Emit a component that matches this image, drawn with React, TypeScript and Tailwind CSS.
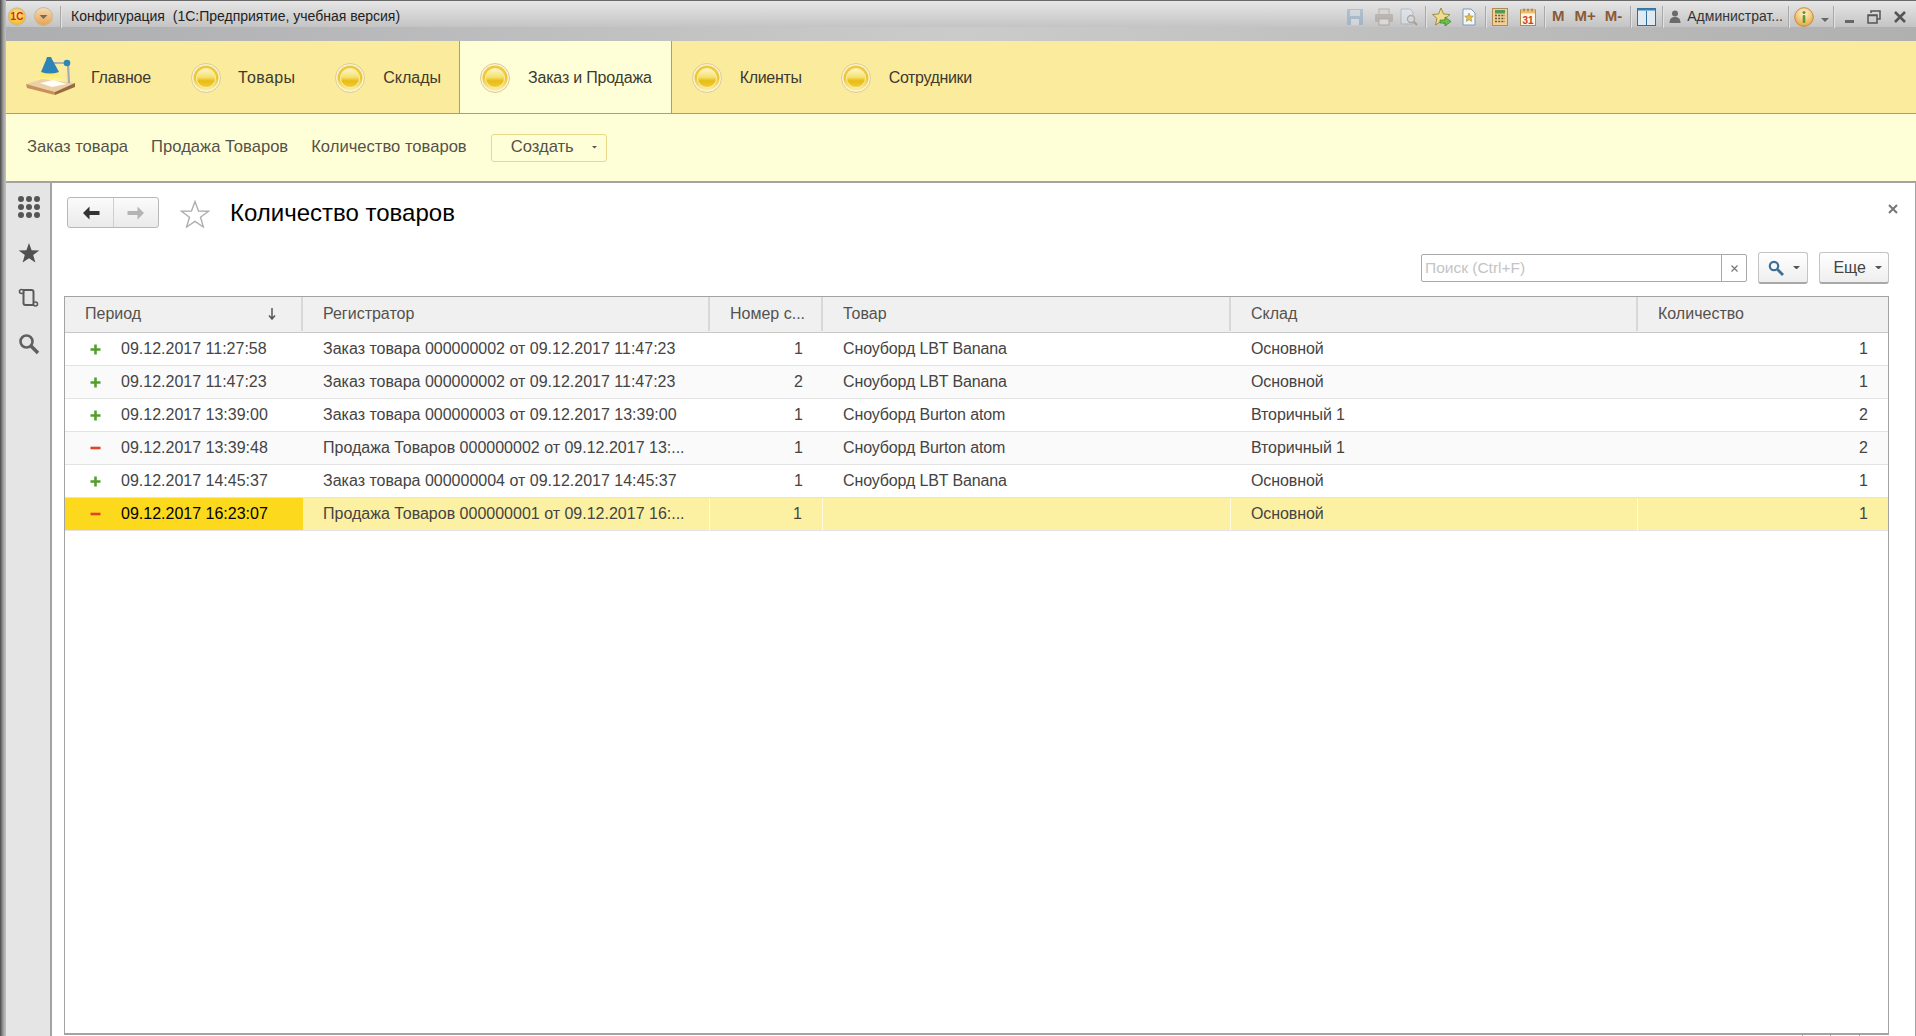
import React from "react";

const rows = [
  { s: "+", d: "09.12.2017 11:27:58", r: "Заказ товара 000000002 от 09.12.2017 11:47:23", n: "1", t: "Сноуборд LBT Banana", w: "Основной", q: "1" },
  { s: "+", d: "09.12.2017 11:47:23", r: "Заказ товара 000000002 от 09.12.2017 11:47:23", n: "2", t: "Сноуборд LBT Banana", w: "Основной", q: "1" },
  { s: "+", d: "09.12.2017 13:39:00", r: "Заказ товара 000000003 от 09.12.2017 13:39:00", n: "1", t: "Сноуборд Burton atom", w: "Вторичный 1", q: "2" },
  { s: "-", d: "09.12.2017 13:39:48", r: "Продажа Товаров 000000002 от 09.12.2017 13:...", n: "1", t: "Сноуборд Burton atom", w: "Вторичный 1", q: "2" },
  { s: "+", d: "09.12.2017 14:45:37", r: "Заказ товара 000000004 от 09.12.2017 14:45:37", n: "1", t: "Сноуборд LBT Banana", w: "Основной", q: "1" },
  { s: "-", d: "09.12.2017 16:23:07", r: "Продажа Товаров 000000001 от 09.12.2017 16:...", n: "1", t: "", w: "Основной", q: "1" },
];

const gridCols = "grid grid-cols-[238px_407px_113px_408px_407px_1fr]";

function Ball({ id }: { id: string }) {
  return (
    <svg width="30" height="30" viewBox="0 0 30 30" className="shrink-0">
      <defs>
        <linearGradient id={id + "a"} x1="0" y1="0" x2="0" y2="1">
          <stop offset="0" stopColor="#eecb48" />
          <stop offset="0.5" stopColor="#ecc630" />
          <stop offset="1" stopColor="#fbeea8" />
        </linearGradient>
        <linearGradient id={id + "b"} x1="0" y1="0" x2="0" y2="1">
          <stop offset="0" stopColor="#fff8c8" />
          <stop offset="0.45" stopColor="#f6e070" />
          <stop offset="0.65" stopColor="#e8bc14" />
          <stop offset="1" stopColor="#f0cc3c" />
        </linearGradient>
      </defs>
      <circle cx="15" cy="15" r="14.5" fill="#fdf5cc" stroke="#dbc99e" strokeWidth="1" />
      <circle cx="15" cy="15" r="12.5" fill={`url(#${id}a)`} />
      <circle cx="15" cy="15" r="9.5" fill={`url(#${id}b)`} stroke="#fbeeb0" strokeWidth="1" />
    </svg>
  );
}

function Lamp() {
  return (
    <svg width="50" height="40" viewBox="0 0 50 40" className="shrink-0">
      <defs>
        <linearGradient id="lampLight" x1="0" y1="0" x2="0" y2="1">
          <stop offset="0" stopColor="#ffe94a" />
          <stop offset="1" stopColor="#fff6b8" />
        </linearGradient>
      </defs>
      <path d="M17 15 L30 15 L40 27 L8 27 Z" fill="url(#lampLight)" />
      <path d="M0 28 L16 23 L49 27 L29 36 Z" fill="#ebcfa6" />
      <path d="M14 27 L27 24 L41 28 L26 31 Z" fill="#fffdf6" />
      <path d="M0 28 L29 36 L29 39 L1 32 Z" fill="#c98f5a" />
      <path d="M29 36 L49 27 L49 31 L29 39 Z" fill="#9a6a3f" />
      <path d="M27 7 H41" stroke="#a8b0b8" strokeWidth="2" />
      <path d="M42 8 L43 27" stroke="#a7abb0" strokeWidth="2.2" />
      <circle cx="41" cy="7" r="3.3" fill="#2d86b8" />
      <path d="M21 1 H25 L26.5 4 L33 16 Q24 19 15 16 L20 4 Z" fill="#2f84b7" />
    </svg>
  );
}

function NavItem({ label, id, active, extra, pr }: { label: string; id: string; active?: boolean; extra?: string; pr?: string }) {
  return (
    <div className={`flex items-center h-full pl-5 ${pr ?? "pr-5"} gap-[18px] pt-px ${active ? "bg-[#ffffd7] border-x border-[#c0a32a] h-[73px] relative z-10" : ""}`}>
      <Ball id={id} />
      <span className={`text-[16px] text-[#3d3a30] whitespace-nowrap ${extra ?? ""}`}>{label}</span>
    </div>
  );
}

const Sep = () => <div className="w-px h-[22px] bg-[#a8a8a8] border-r border-[#e2e2e2] box-content" />;

function Floppy() {
  return (
    <svg width="18" height="18" viewBox="0 0 18 18" className="opacity-40">
      <rect x="1" y="1" width="16" height="16" rx="1" fill="#6f9bc0" />
      <rect x="4" y="2" width="10" height="6" fill="#c9d9e6" />
      <rect x="5" y="11" width="8" height="6" fill="#dfe8ef" />
    </svg>
  );
}
function Printer() {
  return (
    <svg width="20" height="18" viewBox="0 0 20 18" className="opacity-45">
      <rect x="5" y="1" width="10" height="6" fill="#d8d2cc" stroke="#8b8078" />
      <rect x="1" y="6" width="18" height="8" rx="1" fill="#9e9287" />
      <rect x="5" y="11" width="10" height="6" fill="#eee" stroke="#8b8078" />
    </svg>
  );
}
function Preview() {
  return (
    <svg width="20" height="18" viewBox="0 0 20 18" className="opacity-45">
      <path d="M2 1 H11 L14 4 V16 H2 Z" fill="#e8eef4" stroke="#7e9db8" />
      <circle cx="12" cy="11" r="3.5" fill="#d7e5f0" stroke="#8a7a68" strokeWidth="1.3" />
      <path d="M14.5 13.5 L18 17" stroke="#8a6a48" strokeWidth="2" />
    </svg>
  );
}
function StarArrow() {
  return (
    <svg width="20" height="20" viewBox="0 0 20 20">
      <path d="M9 1 L11.5 7 L18 7.5 L13 11.5 L14.5 18 L9 14.5 L3.5 18 L5 11.5 L0.5 7.5 L6.5 7 Z" fill="#f0dc8a" stroke="#8a7a30" strokeWidth="0.8" />
      <path d="M8 13 H13 V10 L19 14.5 L13 19 V16 H8 Z" fill="#6cc04a" stroke="#3f7e2a" strokeWidth="0.7" />
    </svg>
  );
}
function Bookmark() {
  return (
    <svg width="14" height="18" viewBox="0 0 14 18">
      <path d="M1 1 H9 L13 5 V17 H1 Z" fill="#f5f8fb" stroke="#7f9ab2" />
      <path d="M7 5 L8.3 8 L11.3 8.2 L9 10.3 L9.8 13.4 L7 11.7 L4.2 13.4 L5 10.3 L2.7 8.2 L5.7 8 Z" fill="#e8c040" stroke="#8f7a35" strokeWidth="0.5" />
    </svg>
  );
}
function Calc() {
  return (
    <svg width="16" height="18" viewBox="0 0 16 18">
      <rect x="0.5" y="0.5" width="15" height="17" fill="#f2cf96" stroke="#b08a50" />
      <rect x="3" y="2" width="10" height="3.5" fill="#4f9a54" />
      <path d="M3 7.5 H13 M3 10.5 H13 M3 13.5 H13" stroke="#6d5a3a" strokeWidth="1.6" strokeDasharray="2 1.2" />
    </svg>
  );
}
function Calendar() {
  return (
    <svg width="16" height="18" viewBox="0 0 16 18">
      <rect x="0.5" y="2" width="15" height="15.5" fill="#fbf5e6" stroke="#b08a50" />
      <rect x="1" y="2" width="14" height="3.5" fill="#f0bf70" />
      <path d="M4 0.5 V3.5 M8 0.5 V3.5 M12 0.5 V3.5" stroke="#8a6a40" />
      <text x="8" y="15.5" textAnchor="middle" fontSize="10" fontWeight="700" fill="#c9421f" fontFamily="Liberation Sans, sans-serif">31</text>
    </svg>
  );
}
function Panels() {
  return (
    <svg width="19" height="18" viewBox="0 0 19 18">
      <rect x="0.5" y="0.5" width="18" height="17" fill="#dfeaf3" stroke="#2f6d9c" />
      <rect x="0.5" y="0.5" width="18" height="2" fill="#3a7fb0" />
      <path d="M9.5 3 V17" stroke="#2f6d9c" />
    </svg>
  );
}
function User() {
  return (
    <svg width="12" height="14" viewBox="0 0 12 14">
      <circle cx="6" cy="3.5" r="3" fill="#6b6b6b" />
      <path d="M0.5 13 C0.5 8.5 3 7 6 7 C9 7 11.5 8.5 11.5 13 Z" fill="#6b6b6b" />
    </svg>
  );
}
function Info() {
  return (
    <svg width="20" height="20" viewBox="0 0 20 20">
      <defs>
        <radialGradient id="inf" cx="0.5" cy="0.3" r="0.8">
          <stop offset="0" stopColor="#fff6d0" />
          <stop offset="1" stopColor="#e49a32" />
        </radialGradient>
      </defs>
      <circle cx="10" cy="10" r="9.3" fill="url(#inf)" stroke="#c98a35" />
      <circle cx="10" cy="5.5" r="1.6" fill="#5f9a2a" />
      <rect x="8.7" y="8" width="2.6" height="8" rx="1" fill="#5f9a2a" />
    </svg>
  );
}
const Caret = ({ c = "#555", w = 8 }: { c?: string; w?: number }) => (
  <svg width={w} height={w / 2} viewBox="0 0 8 4" className="shrink-0"><path d="M0 0 H8 L4 4 Z" fill={c} /></svg>
);

function Logo1C() {
  return (
    <svg width="18" height="19" viewBox="0 0 18 19">
      <defs>
        <radialGradient id="lg" cx="0.5" cy="0.4" r="0.6">
          <stop offset="0" stopColor="#ffe88a" />
          <stop offset="1" stopColor="#f3b722" />
        </radialGradient>
      </defs>
      <circle cx="9" cy="9.5" r="8.6" fill="url(#lg)" stroke="#c9b89a" />
      <text x="9" y="13" textAnchor="middle" fontSize="10" fontWeight="700" fill="#d5281a" fontFamily="Liberation Sans, sans-serif">1С</text>
    </svg>
  );
}
function MenuBtn() {
  return (
    <svg width="19" height="19" viewBox="0 0 19 19">
      <defs>
        <linearGradient id="mb" x1="0" y1="0" x2="0" y2="1">
          <stop offset="0" stopColor="#f3dcb8" />
          <stop offset="1" stopColor="#e7a24e" />
        </linearGradient>
      </defs>
      <circle cx="9.5" cy="9.5" r="9" fill="url(#mb)" stroke="#c9b89a" />
      <path d="M5.5 8 H13.5 L9.5 12 Z" fill="#7a6a58" />
    </svg>
  );
}

function TitleBar() {
  return (
    <div className="h-[41px] shrink-0 relative bg-gradient-to-r from-[#adaeb0] via-[#cbcbcb] to-[#b0b0b0]">
      <div className="h-[27px] flex items-center bg-gradient-to-b from-[#e6e6e6] to-[#c4c4c4] border-t border-[#6a6a6a] pl-[2px] pr-[10px] pt-[5px]">
        <Logo1C />
        <div className="ml-[8px]"><MenuBtn /></div>
        <div className="ml-[7px]"><Sep /></div>
        <span className="ml-[9px] text-[14px] text-[#222] whitespace-nowrap">Конфигурация&nbsp; (1С:Предприятие, учебная версия)</span>
        <div className="flex-1" />
        <Floppy />
        <div className="ml-[10px]"><Printer /></div>
        <div className="ml-[5px]"><Preview /></div>
        <div className="ml-[6px]"><Sep /></div>
        <div className="ml-[5px]"><StarArrow /></div>
        <div className="ml-[10px]"><Bookmark /></div>
        <div className="ml-[9px]"><Sep /></div>
        <div className="ml-[5px]"><Calc /></div>
        <div className="ml-[12px]"><Calendar /></div>
        <div className="ml-[8px]"><Sep /></div>
        <span className="ml-[6px] text-[15px] font-bold text-[#8a5a35]">M</span>
        <span className="ml-[10px] text-[15px] font-bold text-[#8a5a35]">M+</span>
        <span className="ml-[9px] text-[15px] font-bold text-[#8a5a35]">M-</span>
        <div className="ml-[8px]"><Sep /></div>
        <div className="ml-[5px]"><Panels /></div>
        <div className="ml-[6px]"><Sep /></div>
        <div className="ml-[5px]"><User /></div>
        <span className="ml-[6px] text-[14px] text-[#333] whitespace-nowrap">Администрат...</span>
        <div className="ml-[5px]"><Sep /></div>
        <div className="ml-[4px]"><Info /></div>
        <div className="ml-[7px] mt-[6px]"><Caret c="#666" /></div>
        <div className="ml-[4px]"><Sep /></div>
        <div className="ml-[10px] w-[9px] h-[3px] bg-[#666] mt-[9px]" />
        <svg className="ml-[13px]" width="14" height="14" viewBox="0 0 14 14"><path d="M4 3 V1 H13 V9 H10 M1 5 H10 V13 H1 Z M1 5.5 H10" fill="none" stroke="#555" strokeWidth="1.5" /></svg>
        <svg className="ml-[13px]" width="12" height="12" viewBox="0 0 12 12"><path d="M1 1 L11 11 M11 1 L1 11" stroke="#555" strokeWidth="2.6" /></svg>
      </div>
    </div>
  );
}

function TopNav() {
  return (
    <div className="h-[73px] shrink-0 flex bg-[#fbeb9d] border-b border-[#c0a32a]">
      <div className="flex items-center h-full pl-[20px] pr-[20px] gap-[15px]">
        <div className="-mt-[2px]"><Lamp /></div>
        <span className="text-[16px] text-[#3d3a30] pt-px tracking-[-0.15px]">Главное</span>
      </div>
      <NavItem label="Товары" id="b1" extra="tracking-[0.35px] -ml-[1px]" />
      <NavItem label="Склады" id="b2" pr="pr-[18px]" />
      <NavItem label="Заказ и Продажа" id="b3" active pr="pr-[19px]" extra="tracking-[-0.2px]" />
      <NavItem label="Клиенты" id="b4" pr="pr-[19px]" extra="tracking-[-0.3px]" />
      <NavItem label="Сотрудники" id="b5" extra="tracking-[-0.36px]" />
    </div>
  );
}

function SubNav() {
  return (
    <div className="h-[69px] shrink-0 flex items-center bg-[#ffffd7] border-b-2 border-[#a3a3a3] pl-[21px] text-[16.6px] text-[#55524a] gap-[23px]">
      <span>Заказ товара</span>
      <span>Продажа Товаров</span>
      <span>Количество товаров</span>
      <div className="ml-[1px] w-[116px] h-[28px] flex items-center border border-[#e8d88a] rounded-[3px] pl-[19px] pr-[9px] justify-between">
        <span>Создать</span>
        <Caret c="#555" w={5} />
      </div>
    </div>
  );
}

function Sidebar() {
  return (
    <div className="w-[46px] shrink-0 bg-[#e5e5e5] border-r-2 border-[#a3a3a3] flex flex-col items-center pt-[13px] pl-[1px] gap-[14px]">
      <svg width="22" height="22" viewBox="0 0 22 22" fill="#555">
        {[3, 11, 19].flatMap((y) => [3, 11, 19].map((x) => <circle key={`${x}-${y}`} cx={x} cy={y} r="3" />))}
      </svg>
      <svg width="22" height="22" viewBox="0 0 22 22" fill="#505050" className="mt-[10px]">
        <path d="M11 1 L13.6 8.2 L21.3 8.4 L15.2 13.1 L17.4 20.6 L11 16.2 L4.6 20.6 L6.8 13.1 L0.7 8.4 L8.4 8.2 Z" />
      </svg>
      <svg width="21" height="22" viewBox="0 0 21 22" fill="none" stroke="#5a5a5a" strokeWidth="2" className="mt-[9px]">
        <path d="M3 3 H13.5 Q15.5 3 15.5 5 V18" />
        <path d="M5.5 4 V16 Q5.5 18 7.5 18 H18" />
        <circle cx="3.5" cy="4.5" r="2" fill="#e5e5e5" strokeWidth="1.6" />
        <circle cx="17.5" cy="17" r="2" fill="#e5e5e5" strokeWidth="1.6" />
      </svg>
      <svg width="22" height="22" viewBox="0 0 22 22" fill="none" stroke="#606060" className="mt-[10px]">
        <circle cx="8.5" cy="8.5" r="6" strokeWidth="2.6" />
        <path d="M13 13 L20 20" strokeWidth="3.6" />
      </svg>
    </div>
  );
}

function ContentHeader() {
  return (
    <div className="h-[69px] shrink-0 flex items-start pl-[15px] pt-[14px] relative">
      <div className="flex w-[92px] h-[31px] border border-[#b8b8b8] rounded-[3px] bg-gradient-to-b from-[#fbfbfb] to-[#eaeaea]">
        <div className="w-[46px] flex items-center justify-center border-r border-[#cfcfcf]">
          <svg width="18" height="14" viewBox="0 0 18 14"><path d="M7.5 0.5 L1 7 L7.5 13.5 V9 H17.5 V5 H7.5 Z" fill="#333" /></svg>
        </div>
        <div className="flex-1 flex items-center justify-center">
          <svg width="18" height="14" viewBox="0 0 18 14"><path d="M10.5 0.5 L17 7 L10.5 13.5 V9 H0.5 V5 H10.5 Z" fill="#b4b4b4" /></svg>
        </div>
      </div>
      <svg className="ml-[21px] mt-[3px]" width="30" height="28" viewBox="0 0 30 28">
        <path d="M15 1.5 L18.5 11 L28.5 11.2 L20.5 17.3 L23.4 27 L15 21.3 L6.6 27 L9.5 17.3 L1.5 11.2 L11.5 11 Z" fill="#fff" stroke="#aeaeae" strokeWidth="1.4" />
      </svg>
      <h1 className="ml-[20px] text-[24px] leading-[30px] text-black font-normal mt-px">Количество товаров</h1>
      <svg className="absolute right-[17px] top-[21px]" width="10" height="10" viewBox="0 0 10 10"><path d="M1 1 L9 9 M9 1 L1 9" stroke="#777" strokeWidth="2" /></svg>
    </div>
  );
}

function SearchBar() {
  return (
    <div className="h-[44px] shrink-0 flex items-start justify-end pr-[26px]">
      <div className="mt-[2px] w-[326px] h-[28px] flex border border-[#a8a8a8] rounded-[2px] bg-white">
        <span className="flex-1 pl-[3px] text-[15.5px] leading-[26px] text-[#c4c4c4]">Поиск (Ctrl+F)</span>
        <div className="w-[25px] flex items-center justify-center border-l border-[#a8a8a8]">
          <svg width="7" height="7" viewBox="0 0 7 7"><path d="M0.5 0.5 L6.5 6.5 M6.5 0.5 L0.5 6.5" stroke="#777" strokeWidth="1.2" /></svg>
        </div>
      </div>
      <div className="ml-[11px] w-[50px] h-[32px] flex items-center justify-center gap-[9px] pl-[2px] border border-[#c4c4c4] border-b-2 border-b-[#a8a8a8] rounded-[3px] bg-gradient-to-b from-white to-[#eeeeee]">
        <svg width="16" height="16" viewBox="0 0 16 16" fill="none" stroke="#3d7097"><circle cx="6" cy="6" r="4.2" strokeWidth="2.2" /><path d="M9.5 9.5 L15 15" strokeWidth="2.8" /></svg>
        <Caret c="#555" w={7} />
      </div>
      <div className="ml-[11px] w-[70px] h-[32px] flex items-center justify-end pr-[6px] gap-[9px] border border-[#c4c4c4] border-b-2 border-b-[#a8a8a8] rounded-[3px] bg-gradient-to-b from-white to-[#eeeeee] text-[16px] text-[#444]">
        <span>Еще</span>
        <Caret c="#555" w={7} />
      </div>
    </div>
  );
}

function HeaderCell({ children, last }: { children: React.ReactNode; last?: boolean }) {
  return <div className={`h-[34px] pl-[20px] flex items-center text-[16px] text-[#55524e] ${last ? "" : "border-r-2 border-[#d8d8d8]"}`}>{children}</div>;
}

function Table() {
  return (
    <div className="flex-1 mr-[26px] ml-[12px] mb-px border border-[#a3a3a3] border-b-2 bg-white relative text-[16px] text-[#444]">
      <div className={`${gridCols} bg-[#f0f0f0] border-b border-[#c8c8c8] pb-px`}>
        <HeaderCell>
          <span className="flex-1">Период</span>
          <svg className="mr-[25px]" width="8" height="12" viewBox="0 0 8 12"><path d="M4 0 V10 M1 7.5 L4 11 L7 7.5" fill="none" stroke="#555" strokeWidth="1.5" /></svg>
        </HeaderCell>
        <HeaderCell>Регистратор</HeaderCell>
        <HeaderCell>Номер с...</HeaderCell>
        <HeaderCell>Товар</HeaderCell>
        <HeaderCell>Склад</HeaderCell>
        <HeaderCell last>Количество</HeaderCell>
      </div>
      {rows.map((row, i) => {
        const sel = i === 5;
        const base = "h-[33px] flex items-center border-b border-[#e3e3e3] whitespace-nowrap";
        const divider = sel ? "border-r border-r-[#fffbe0]" : "";
        return (
          <div key={i} className={`${gridCols} ${sel ? "bg-[#fcf0a2]" : i % 2 ? "bg-[#fafafa]" : "bg-white"}`}>
            <div className={`${base} pl-[25px] ${sel ? "bg-[#fdd91e] text-black" : ""}`}>
              <span className="w-[11px] flex justify-center">
                {row.s === "+" ? (
                  <svg width="11" height="11" viewBox="0 0 11 11"><path d="M5.5 0.5 V10.5 M0.5 5.5 H10.5" stroke="#52a02c" strokeWidth="2.6" /></svg>
                ) : (
                  <svg width="11" height="4" viewBox="0 0 11 4"><path d="M0.5 2 H10.5" stroke="#e0432a" strokeWidth="2.6" /></svg>
                )}
              </span>
              <span className="ml-[20px]">{row.d}</span>
            </div>
            <div className={`${base} ${divider} pl-[20px]`}>{row.r}</div>
            <div className={`${base} ${divider} justify-end pr-[20px]`}>{row.n}</div>
            <div className={`${base} ${divider} pl-[20px] tracking-[-0.13px]`}>{row.t}</div>
            <div className={`${base} ${divider} pl-[20px] tracking-[-0.1px]`}>{row.w}</div>
            <div className={`${base} justify-end pr-[20px]`}>{row.q}</div>
          </div>
        );
      })}
      <div className="absolute left-[1737px] -bottom-[3px] w-px h-[2px] bg-[#a3a3a3]" />
      <div className="absolute left-[1765px] -bottom-[3px] w-px h-[2px] bg-[#a3a3a3]" />
      <div className="absolute left-[1794px] -bottom-[3px] w-px h-[2px] bg-[#a3a3a3]" />
    </div>
  );
}

export default function App() {
  return (
    <div className="w-[1916px] h-[1036px] overflow-hidden flex bg-[#c8c8c8] font-['Liberation_Sans',Arial,sans-serif]">
      <div className="w-[6px] shrink-0 bg-gradient-to-r from-[#4a4a4a] via-[#9a9a9a] to-[#c4c4c4]" />
      <div className="flex-1 flex flex-col min-h-0 min-w-0">
        <TitleBar />
        <TopNav />
        <SubNav />
        <div className="flex-1 flex min-h-0 bg-white border-r border-r-[#a3a3a3]">
          <Sidebar />
          <div className="flex-1 flex flex-col min-w-0">
            <ContentHeader />
            <SearchBar />
            <Table />
          </div>
        </div>
      </div>
    </div>
  );
}
